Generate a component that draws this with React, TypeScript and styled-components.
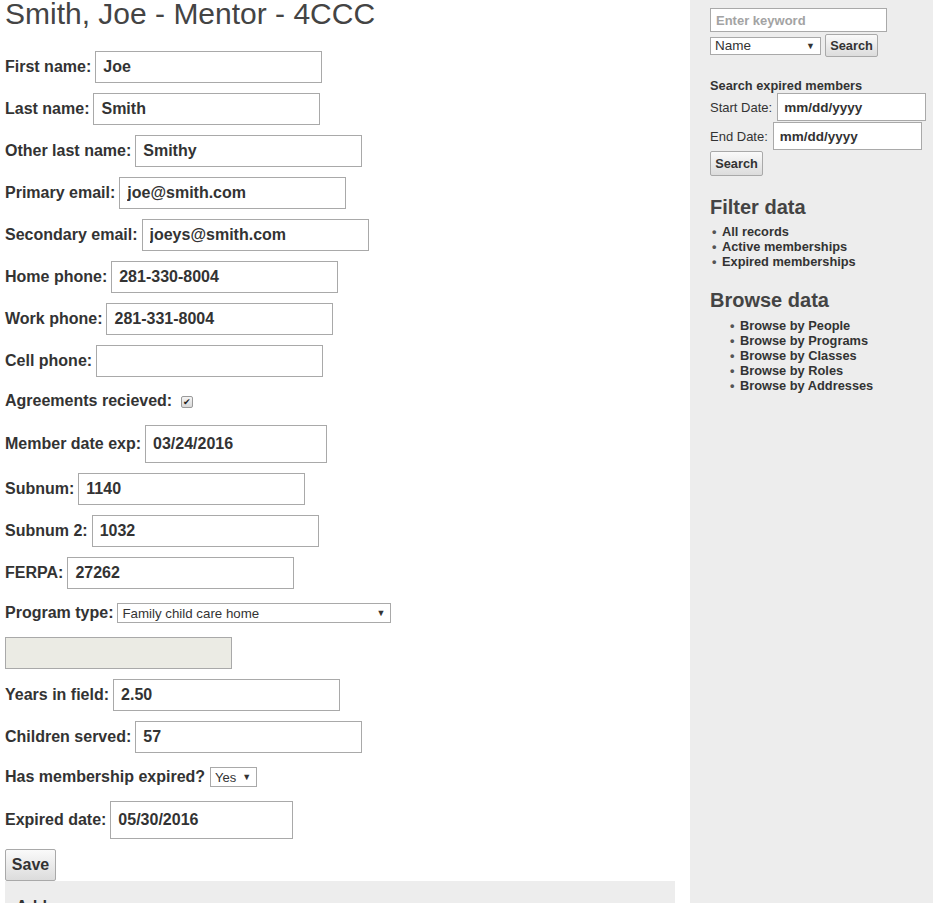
import { createGlobalStyle, styled } from "styled-components";

const GlobalStyle = createGlobalStyle`
  html, body {
    margin: 0;
    padding: 0;
    background: #ffffff;
    font-family: "Liberation Sans", Arial, sans-serif;
    color: #333333;
  }
`;

const Page = styled.div`
  display: grid;
  grid-template-columns: 690px 243px;
  min-height: 903px;
  overflow: hidden;
`;

const Main = styled.div`
  padding: 0 15px 0 5px;
`;

const Title = styled.h1`
  margin: -1px 0 0;
  font-size: 30px;
  line-height: 30px;
  font-weight: normal;
  color: #444444;
  white-space: nowrap;
`;

const Form = styled.form`
  display: flex;
  flex-direction: column;
  gap: 10px;
  margin-top: 22px;
`;

const FieldRow = styled.div<{ $gap?: number; $height?: number }>`
  display: flex;
  align-items: center;
  gap: ${(p) => p.$gap ?? 4}px;
  min-height: ${(p) => p.$height ?? 0}px;
`;

const Label = styled.label`
  font-size: 16px;
  font-weight: bold;
  color: #333333;
  white-space: nowrap;
`;

const TextInput = styled.input<{ $width?: number; $height?: number }>`
  box-sizing: border-box;
  width: ${(p) => p.$width ?? 227}px;
  height: ${(p) => p.$height ?? 32}px;
  border: 1px solid #a9a9a9;
  padding: 0 7px;
  font-family: "Liberation Sans", Arial, sans-serif;
  font-size: 16px;
  font-weight: bold;
  color: #333333;
  background: #ffffff;
  outline: none;

  &:disabled {
    background: #ebebe4;
  }
`;

const Check = styled.input`
  appearance: none;
  margin: 2px 0 0 5px;
  width: 12px;
  height: 12px;
  border: 1px solid #9a9a9a;
  border-radius: 2px;
  background: linear-gradient(#f4f4f4, #d8d8d8);
  display: inline-flex;
  align-items: center;
  justify-content: center;
  box-sizing: border-box;

  &::after {
    content: "✔";
    font-size: 9px;
    line-height: 10px;
    color: #222222;
  }
`;

const SelectWrap = styled.span`
  position: relative;
  display: inline-block;

  &::after {
    content: "▼";
    position: absolute;
    right: 6px;
    top: 50%;
    transform: translateY(-50%);
    font-size: 9px;
    color: #333333;
    pointer-events: none;
  }
`;

const Select = styled.select<{ $width: number; $height?: number; $size?: number }>`
  appearance: none;
  box-sizing: border-box;
  width: ${(p) => p.$width}px;
  height: ${(p) => p.$height ?? 20}px;
  border: 1px solid #a9a9a9;
  border-radius: 0;
  padding: 0 16px 0 4px;
  background: #ffffff;
  font-family: "Liberation Sans", Arial, sans-serif;
  font-size: ${(p) => p.$size ?? 13.3}px;
  color: #333333;
  outline: none;
`;

const Button = styled.button<{ $width: number; $height: number; $size?: number }>`
  box-sizing: border-box;
  width: ${(p) => p.$width}px;
  height: ${(p) => p.$height}px;
  padding: 0;
  border: 1px solid #a9a9a9;
  border-radius: 2px;
  background: linear-gradient(#fafafa, #dcdcdc);
  font-family: "Liberation Sans", Arial, sans-serif;
  font-size: ${(p) => p.$size ?? 16}px;
  font-weight: bold;
  color: #333333;
`;

const SubSection = styled.div`
  background: #ededed;
  height: 60px;
  padding: 17px 0 0 11px;
  box-sizing: border-box;
  font-size: 16px;
  font-weight: bold;
  color: #333333;
`;

const Sidebar = styled.aside`
  background: #ededed;
  padding: 8px 0 0 20px;
  display: flex;
  flex-direction: column;
`;

const SideRow = styled.div<{ $gap?: number }>`
  display: flex;
  align-items: center;
  gap: ${(p) => p.$gap ?? 4}px;
`;

const KeywordInput = styled.input`
  box-sizing: border-box;
  width: 177px;
  height: 24px;
  border: 1px solid #a9a9a9;
  padding: 0 5px;
  font-family: "Liberation Sans", Arial, sans-serif;
  font-size: 13px;
  font-weight: bold;
  color: #333333;
  outline: none;

  &::placeholder {
    color: #a3a3a3;
  }
`;

const SmallHeading = styled.div`
  margin-top: 21px;
  font-size: 12.8px;
  line-height: 15px;
  font-weight: bold;
  color: #333333;
`;

const DateLabel = styled.span`
  font-size: 13px;
  color: #333333;
`;

const DateInput = styled.input`
  box-sizing: border-box;
  width: 149px;
  height: 28px;
  border: 1px solid #a9a9a9;
  padding: 0 6px;
  font-family: "Liberation Sans", Arial, sans-serif;
  font-size: 13.5px;
  font-weight: bold;
  color: #333333;
  outline: none;
`;

const DateStack = styled.div`
  display: flex;
  flex-direction: column;
  gap: 1px;
  margin-top: 0;
`;

const SideHeading = styled.h3`
  margin: 20px 0 0;
  font-size: 20px;
  line-height: 23px;
  font-weight: bold;
  color: #444444;
`;

const LinkList = styled.ul<{ $indent: number; $top: number }>`
  margin: ${(p) => p.$top}px 0 0;
  padding-left: ${(p) => p.$indent}px;
  list-style: none;
`;

const LinkItem = styled.li`
  position: relative;
  font-size: 12.8px;
  line-height: 15px;
  font-weight: bold;
  color: #333333;

  &::before {
    content: "•";
    position: absolute;
    left: -10px;
    color: #555555;
  }
`;

const fields: { label: string; value: string }[] = [
  { label: "First name:", value: "Joe" },
  { label: "Last name:", value: "Smith" },
  { label: "Other last name:", value: "Smithy" },
  { label: "Primary email:", value: "joe@smith.com" },
  { label: "Secondary email:", value: "joeys@smith.com" },
  { label: "Home phone:", value: "281-330-8004" },
  { label: "Work phone:", value: "281-331-8004" },
  { label: "Cell phone:", value: "" },
];

const ids = [
  { label: "Subnum:", value: "1140" },
  { label: "Subnum 2:", value: "1032" },
  { label: "FERPA:", value: "27262" },
];

export default function App() {
  return (
    <>
      <GlobalStyle />
      <Page>
        <Main>
          <Title>Smith, Joe - Mentor - 4CCC</Title>
          <Form onSubmit={(e) => e.preventDefault()}>
            {fields.map((f) => (
              <FieldRow key={f.label}>
                <Label>{f.label}</Label>
                <TextInput defaultValue={f.value} />
              </FieldRow>
            ))}
            <FieldRow $height={28}>
              <Label>Agreements recieved:</Label>
              <Check type="checkbox" defaultChecked />
            </FieldRow>
            <FieldRow>
              <Label>Member date exp:</Label>
              <TextInput $width={182} $height={38} defaultValue="03/24/2016" />
            </FieldRow>
            {ids.map((f) => (
              <FieldRow key={f.label}>
                <Label>{f.label}</Label>
                <TextInput defaultValue={f.value} />
              </FieldRow>
            ))}
            <FieldRow $height={28}>
              <Label>Program type:</Label>
              <SelectWrap>
                <Select $width={274} defaultValue="fcch">
                  <option value="fcch">Family child care home</option>
                  <option value="center">Child care center</option>
                </Select>
              </SelectWrap>
            </FieldRow>
            <FieldRow>
              <TextInput disabled />
            </FieldRow>
            <FieldRow>
              <Label>Years in field:</Label>
              <TextInput defaultValue="2.50" />
            </FieldRow>
            <FieldRow>
              <Label>Children served:</Label>
              <TextInput defaultValue="57" />
            </FieldRow>
            <FieldRow $height={28} $gap={5}>
              <Label>Has membership expired?</Label>
              <SelectWrap>
                <Select $width={47} $size={13} defaultValue="yes">
                  <option value="yes">Yes</option>
                  <option value="no">No</option>
                </Select>
              </SelectWrap>
            </FieldRow>
            <FieldRow>
              <Label>Expired date:</Label>
              <TextInput $width={183} $height={38} defaultValue="05/30/2016" />
            </FieldRow>
            <div>
              <Button type="submit" $width={51} $height={32}>
                Save
              </Button>
              <SubSection>Addresses</SubSection>
            </div>
          </Form>
        </Main>

        <Sidebar>
          <KeywordInput placeholder="Enter keyword" />
          <SideRow $gap={4} style={{ marginTop: 2 }}>
            <SelectWrap>
              <Select $width={111} $height={18} $size={13.5} defaultValue="name">
                <option value="name">Name</option>
                <option value="email">Email</option>
              </Select>
            </SelectWrap>
            <Button $width={53} $height={23} $size={12.8}>
              Search
            </Button>
          </SideRow>

          <SmallHeading>Search expired members</SmallHeading>
          <DateStack>
            <SideRow $gap={5}>
              <DateLabel>Start Date:</DateLabel>
              <DateInput defaultValue="mm/dd/yyyy" />
            </SideRow>
            <SideRow $gap={5}>
              <DateLabel>End Date:</DateLabel>
              <DateInput defaultValue="mm/dd/yyyy" />
            </SideRow>
            <div>
              <Button $width={53} $height={25} $size={12.8}>
                Search
              </Button>
            </div>
          </DateStack>

          <SideHeading>Filter data</SideHeading>
          <LinkList $indent={12} $top={5}>
            <LinkItem>All records</LinkItem>
            <LinkItem>Active memberships</LinkItem>
            <LinkItem>Expired memberships</LinkItem>
          </LinkList>

          <SideHeading>Browse data</SideHeading>
          <LinkList $indent={30} $top={6}>
            <LinkItem>Browse by People</LinkItem>
            <LinkItem>Browse by Programs</LinkItem>
            <LinkItem>Browse by Classes</LinkItem>
            <LinkItem>Browse by Roles</LinkItem>
            <LinkItem>Browse by Addresses</LinkItem>
          </LinkList>
        </Sidebar>
      </Page>
    </>
  );
}
